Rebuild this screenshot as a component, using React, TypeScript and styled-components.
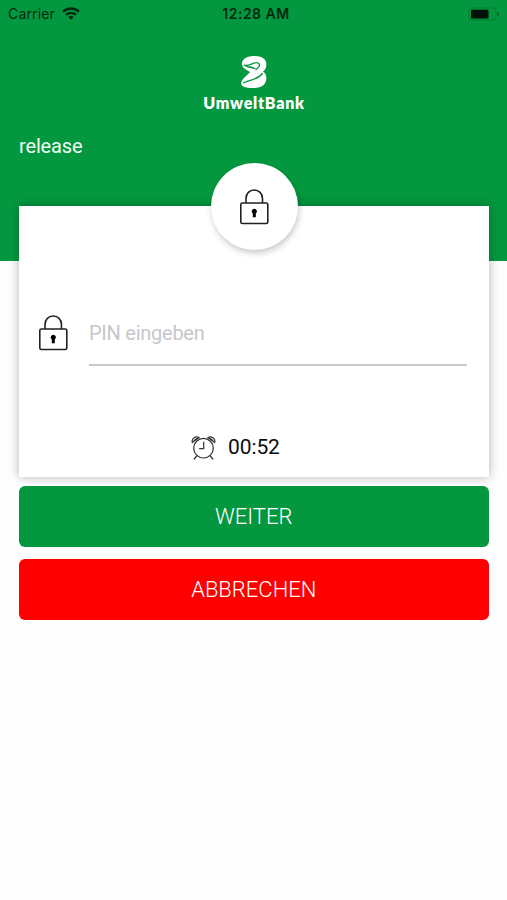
import React from 'react';
import styled, { createGlobalStyle } from 'styled-components';

const GREEN = '#03983f';

const GlobalStyle = createGlobalStyle`
  * { box-sizing: border-box; }
  body { margin: 0; background: #fff; font-family: Roboto, sans-serif; }
`;

const Screen = styled.div`
  width: 507px;
  height: 900px;
  overflow: hidden;
  background: #fefefe;
`;

const Header = styled.header`
  height: 261px;
  background: ${GREEN};
`;

const StatusBar = styled.div`
  height: 27px;
  display: grid;
  grid-template-columns: 1fr auto 1fr;
  align-items: center;
  padding: 0 7px 0 8px;
  font: 400 14px/27px Inter, sans-serif;
  color: #03280f;
`;

const Carrier = styled.div`
  display: flex;
  align-items: center;
  gap: 7px;
  height: 27px;
  letter-spacing: 0.15px;
`;

const Clock = styled.div`
  font-weight: 600;
  letter-spacing: 0.5px;
  padding-left: 4px;
`;

const Battery = styled.div`
  display: flex;
  justify-content: flex-end;
`;

const Brand = styled.div`
  display: flex;
  flex-direction: column;
  align-items: center;
  padding-top: 28px;
  height: 105px;
  color: #fff;
`;

const BrandName = styled.div`
  font: 800 16px/20px Lato, sans-serif;
  letter-spacing: 0.75px;
  margin: 4px 0 0 1px;
`;

const Release = styled.div`
  padding-left: 19px;
  font-size: 20px;
  line-height: 28px;
  letter-spacing: -0.15px;
  color: #f0faf3;
`;

const Card = styled.section`
  position: relative;
  margin: -55px 18.5px 0 19px;
  height: 271px;
  padding: 94px 22px 0 19px;
  background: #fff;
  box-shadow: 0 0 10px rgba(0, 0, 0, 0.3);
`;

const Badge = styled.div`
  position: absolute;
  top: -43px;
  left: 192px;
  width: 87px;
  height: 87px;
  border-radius: 50%;
  background: #fff;
  display: flex;
  align-items: center;
  justify-content: center;
  box-shadow: 1px 3px 6px rgba(0, 0, 0, 0.22);
`;

const PinRow = styled.div`
  display: flex;
  gap: 20px;
  height: 66px;
  align-items: center;
`;

const PinField = styled.input`
  flex: 1;
  min-width: 0;
  height: 66px;
  padding: 1px 0 0;
  border: 0;
  border-bottom: 2px solid #c5caca;
  outline: none;
  background: transparent;
  font: 400 20px Roboto, sans-serif;
  letter-spacing: -0.25px;
  color: #000;
  &::placeholder { color: #c7c7c9; opacity: 1; }
`;

const Timer = styled.div`
  display: flex;
  align-items: center;
  gap: 12px;
  margin: 67px 0 0 153px;
  height: 28px;
  font-size: 21px;
  letter-spacing: -0.1px;
  color: #0c0c0c;
`;

const Actions = styled.div`
  display: flex;
  flex-direction: column;
  gap: 12px;
  position: relative;
  padding: 9px 18.5px 0 19px;
`;

const Action = styled.button<{ $color: string }>`
  height: 61px;
  border: 0;
  border-radius: 6px;
  padding: 0;
  background: ${(p) => p.$color};
  color: #fff;
  font: 300 22px/61px Roboto, sans-serif;
`;

const LockIcon = () => (
  <svg width="31" height="36" viewBox="0 0 31 36" fill="none" stroke="#222" strokeWidth="1.6">
    <path d="M7 14V9.5C7 4.6 10.5 1 15.2 1s8.3 3.6 8.3 8.5V14" />
    <rect x="1.8" y="14" width="27" height="20.5" rx="1.6" />
    <path d="M15.3 19.8a2.6 2.6 0 0 1 1.5 4.7v3.7h-3v-3.7a2.6 2.6 0 0 1 1.5-4.7Z" fill="#000" stroke="none" />
  </svg>
);

const AlarmIcon = () => (
  <svg width="25" height="25" viewBox="0 0 25 25" fill="none" stroke="#333" strokeWidth="1.2" strokeLinecap="round">
    <circle cx="12.5" cy="13.2" r="9.8" />
    <path d="M12.7 7v6.7H8.6M5.7 21 3.2 24M19.3 21l2.5 3" />
    <path d="M1.3 7.4C.3 3.4 4.6.5 8 2.5ZM23.7 7.4c1-4-3.3-6.9-6.7-4.9ZM3.2 5.4l2.2-1.8M21.8 5.4l-2.2-1.8" />
  </svg>
);

const WifiIcon = () => (
  <svg width="18" height="13" viewBox="0 0 18 13" fill="none" stroke="#03280f" strokeWidth="2.3">
    <path d="M1 4.8a11.4 11.4 0 0 1 16 0M4 7.9a7.1 7.1 0 0 1 10 0" />
    <path d="M6.3 10.1a3.9 3.9 0 0 1 5.4 0L9 12.8Z" fill="#03280f" stroke="none" />
  </svg>
);

const BatteryIcon = () => (
  <svg width="32" height="14" viewBox="0 0 32 14">
    <rect x="1" y="1" width="27" height="12" rx="3" fill="none" stroke="#037a32" strokeWidth="1" />
    <rect x="3" y="2.8" width="17.5" height="8.7" rx="1" fill="#001207" />
    <path d="M29.5 5c2 .5 2 3.5 0 4Z" fill="#045d28" />
  </svg>
);

const Logo = () => (
  <svg width="28" height="34" viewBox="0 0 28 34">
    <path
      d="M2.2 7C3.6 3 8 1 14.5 1 22 1 26.4 4 26.4 9.2c0 3.2-1.2 5.6-3.4 7.4 2.3 1.6 3.4 3.7 3.4 6.4 0 6.4-4.9 10-12.2 10C7 33 1.2 32 1.2 28.4c0-3.6 4-6.4 9-11.4C5.4 14.6.6 11.6 2.2 7Z"
      fill="#fff"
    />
    <path
      d="M4 10.2c4.6 1.6 8.3-2.6 12.4-2.6 2.8 0 3.6 2 2.5 3.9-.7 1.2-1.7 2.2-2.9 3.1M3.8 27.8c5.3-3.1 13.8-2.8 18.6-9.3"
      fill="none" stroke={GREEN} strokeWidth="1.3" strokeLinecap="round"
    />
    <path d="M4.4 10.6c4.4 1.3 8-.4 12.2 4.1-3.8-1.4-9-1.2-12.2-4.1Z" fill={GREEN} />
  </svg>
);

export default function App() {
  return (
    <Screen>
      <GlobalStyle />
      <Header>
        <StatusBar>
          <Carrier>Carrier <WifiIcon /></Carrier>
          <Clock>12:28 AM</Clock>
          <Battery><BatteryIcon /></Battery>
        </StatusBar>
        <Brand>
          <Logo />
          <BrandName>UmweltBank</BrandName>
        </Brand>
        <Release>release</Release>
      </Header>
      <Card>
        <Badge><LockIcon /></Badge>
        <PinRow>
          <LockIcon />
          <PinField placeholder="PIN eingeben" aria-label="PIN" />
        </PinRow>
        <Timer><AlarmIcon />00:52</Timer>
      </Card>
      <Actions>
        <Action $color={GREEN}>WEITER</Action>
        <Action $color="#ff0000">ABBRECHEN</Action>
      </Actions>
    </Screen>
  );
}
